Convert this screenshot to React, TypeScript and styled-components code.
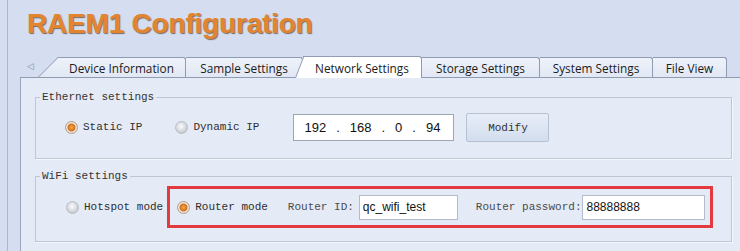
import React from 'react';
import styled, { createGlobalStyle } from 'styled-components';

const GlobalStyle = createGlobalStyle`
  html, body {
    margin: 0;
    padding: 0;
    background: #d5ddf0;
  }
  body {
    width: 740px;
    height: 251px;
    overflow: hidden;
  }
`;

const Window = styled.div`
  margin-left: 7px;
  height: 251px;
  border-left: 1px solid #aeb7c7;
  padding-left: 12px;
  display: flex;
  flex-direction: column;
`;

const Title = styled.h1`
  margin: 0 0 16px;
  padding: 8px 0 0 7px;
  height: 32px;
  font: bold 28px/32px 'Liberation Sans', Arial, sans-serif;
  letter-spacing: -0.2px;
  color: #e3842f;
  text-shadow: 1px 1px 1px rgba(80, 60, 40, 0.7);
`;

const TabStrip = styled.div`
  display: flex;
  align-items: flex-end;
  height: 21px;
  border-bottom: 1px solid #8e9bb1;
  padding-left: 7px;
`;

const ScrollArrow = styled.span`
  align-self: center;
  width: 6px;
  margin-right: 25px;
  font: 9px/1 'DejaVu Sans', sans-serif;
  color: #8c8c8c;
`;

type Slant = 'wide' | 'steep';

const Tab = styled.div<{ $w: number; $active?: boolean; $slant?: Slant }>`
  position: relative;
  z-index: ${(p) => (p.$active ? 2 : 1)};
  box-sizing: border-box;
  width: ${(p) => p.$w}px;
  height: ${(p) => (p.$active ? 22 : 20)}px;
  margin-bottom: ${(p) => (p.$active ? -1 : 0)}px;
  background: ${(p) => (p.$active ? '#ffffff' : 'linear-gradient(#eef2f9, #e1e8f4)')};
  border-top: 1px solid #8e9bb1;
  border-right: 1px solid #8e9bb1;
  border-top-right-radius: 3px;
  display: flex;
  align-items: center;
  justify-content: center;
  font: 11.8px 'Open Sans', 'Noto Sans', sans-serif;
  color: #1b1b1b;
  white-space: nowrap;

  ${(p) =>
    p.$slant &&
    `
    &::before {
      content: '';
      position: absolute;
      top: -1px;
      bottom: 0;
      left: ${p.$slant === 'wide' ? -20 : -8}px;
      width: 26px;
      background: inherit;
      border-top: 1px solid #8e9bb1;
      border-left: 1px solid #8e9bb1;
      transform-origin: bottom left;
      transform: skewX(${p.$slant === 'wide' ? -45 : -21}deg);
      z-index: -1;
    }
  `}
`;

const Panel = styled.div`
  flex: 1;
  background: #e5ebf6;
  border-left: 1px solid #9aa6b9;
  padding: 13px 8px 0 14px;
  display: flex;
  flex-direction: column;
  gap: 11px;
`;

const Group = styled.fieldset<{ $pad: string }>`
  margin: 0;
  min-width: 0;
  border: 1px solid #bfc7d5;
  box-shadow: 1px 1px 0 #f4f7fc;
  padding: ${(p) => p.$pad};
`;

const Legend = styled.legend`
  margin-left: 4px;
  padding: 0 2px;
  font: 11px/13px 'Liberation Mono', monospace;
  color: #333;
`;

const Row = styled.div<{ $indent: number }>`
  display: flex;
  align-items: center;
  padding-left: ${(p) => p.$indent}px;
`;

const RadioOption = styled.label<{ $gapAfter?: number }>`
  display: flex;
  align-items: center;
  gap: 5px;
  margin-right: ${(p) => p.$gapAfter ?? 0}px;
  font: 11px/13px 'Liberation Mono', monospace;
  color: #2e2e2e;
`;

const RadioDot = styled.span<{ $on?: boolean }>`
  width: 13px;
  height: 13px;
  box-sizing: border-box;
  border-radius: 50%;
  border: 1px solid ${(p) => (p.$on ? '#b59c86' : '#b8bcc4')};
  background: ${(p) =>
    p.$on
      ? 'radial-gradient(circle, #f7a848 0, #e07f22 2.5px, #c9702a 3.5px, #f4e9df 4.5px, #ddd3ca 6.5px)'
      : 'radial-gradient(circle at 45% 40%, #fbfbfb 0, #e4e6ea 3px, #c6c9cf 6.5px)'};
`;

const IpBox = styled.div`
  box-sizing: border-box;
  width: 161px;
  height: 27px;
  display: flex;
  align-items: center;
  gap: 10px;
  padding-left: 10px;
  background: #fff;
  border: 1px solid #9da6b4;
  font: 13px 'Liberation Sans', Arial, sans-serif;
  color: #111;
`;

const Button = styled.button`
  box-sizing: border-box;
  width: 83px;
  height: 29px;
  margin-left: 12px;
  border: 1px solid #b6c2d4;
  border-radius: 2px;
  background: linear-gradient(#e8eef8, #d2ddee);
  font: 11px 'Liberation Mono', monospace;
  color: #333;
`;

const RouterFrame = styled.div`
  box-sizing: border-box;
  height: 42px;
  margin-left: 4px;
  padding: 0 5px 0 7px;
  border: 3px solid #e23a3e;
  display: flex;
  align-items: center;
`;

const FieldLabel = styled.span<{ $ml: number }>`
  margin-left: ${(p) => p.$ml}px;
  font: 11px/13px 'Liberation Mono', monospace;
  color: #4a4a4a;
`;

const TextBox = styled.input<{ $w: number; $ml: number }>`
  box-sizing: border-box;
  width: ${(p) => p.$w}px;
  height: 25px;
  margin-left: ${(p) => p.$ml}px;
  padding: 0 3px;
  background: #fff;
  border: 1px solid #b3bccb;
  font: 12px 'Liberation Sans', Arial, sans-serif;
  color: #111;
  outline: none;
`;

const tabs = [
  { label: 'Device Information', w: 128, slant: 'wide' as Slant },
  { label: 'Sample Settings', w: 117 },
  { label: 'Network Settings', w: 119, slant: 'steep' as Slant, active: true },
  { label: 'Storage Settings', w: 118 },
  { label: 'System Settings', w: 113 },
  { label: 'File View', w: 74 },
];

const octets = ['192', '.', '168', '.', '0', '.', '94'];

export default function App() {
  return (
    <Window>
      <GlobalStyle />
      <Title>RAEM1 Configuration</Title>
      <TabStrip>
        <ScrollArrow>◁</ScrollArrow>
        {tabs.map((t) => (
          <Tab key={t.label} $w={t.w} $slant={t.slant} $active={t.active}>
            {t.label}
          </Tab>
        ))}
      </TabStrip>
      <Panel>
        <Group $pad="9px 0 16px 0">
          <Legend>Ethernet settings</Legend>
          <Row $indent={29}>
            <RadioOption $gapAfter={33}>
              <RadioDot $on />
              Static IP
            </RadioOption>
            <RadioOption $gapAfter={34}>
              <RadioDot />
              Dynamic IP
            </RadioOption>
            <IpBox>
              {octets.map((o, i) => (
                <span key={i}>{o}</span>
              ))}
            </IpBox>
            <Button>Modify</Button>
          </Row>
        </Group>
        <Group $pad="3px 0 13px 0">
          <Legend>WiFi settings</Legend>
          <Row $indent={30}>
            <RadioOption>
              <RadioDot />
              Hotspot mode
            </RadioOption>
            <RouterFrame>
              <RadioOption>
                <RadioDot $on />
                Router mode
              </RadioOption>
              <FieldLabel $ml={20}>Router ID:</FieldLabel>
              <TextBox $w={99} $ml={5} readOnly value="qc_wifi_test" />
              <FieldLabel $ml={18}>Router password:</FieldLabel>
              <TextBox $w={123} $ml={1} readOnly value="88888888" />
            </RouterFrame>
          </Row>
        </Group>
      </Panel>
    </Window>
  );
}
